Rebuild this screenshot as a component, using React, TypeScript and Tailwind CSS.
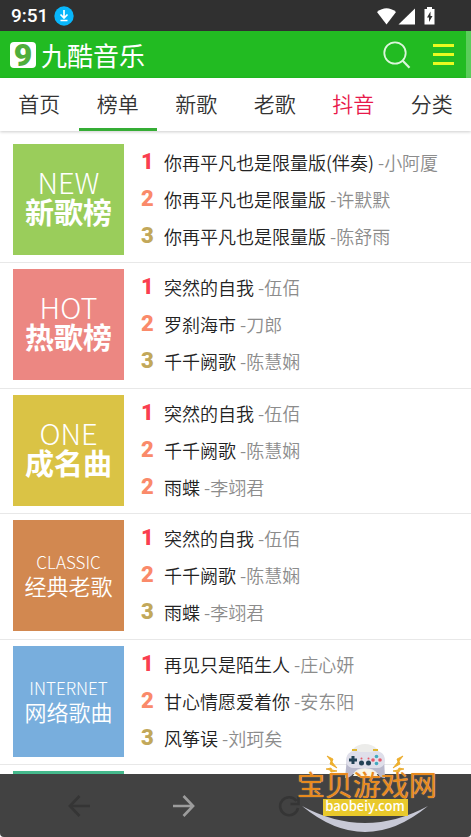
import React from "react";

type Song = { rank: number; title: string; artist: string };
type Chart = { en: string; zh: string; color: string; light?: boolean; songs: Song[] };

const nav = ["首页", "榜单", "新歌", "老歌", "抖音", "分类"];

const charts: Chart[] = [
  {
    en: "NEW", zh: "新歌榜", color: "bg-[#9acd5b]",
    songs: [
      { rank: 1, title: "你再平凡也是限量版(伴奏)", artist: "小阿厦" },
      { rank: 2, title: "你再平凡也是限量版", artist: "许默默" },
      { rank: 3, title: "你再平凡也是限量版", artist: "陈舒雨" },
    ],
  },
  {
    en: "HOT", zh: "热歌榜", color: "bg-[#ec8782]",
    songs: [
      { rank: 1, title: "突然的自我", artist: "伍佰" },
      { rank: 2, title: "罗刹海市", artist: "刀郎" },
      { rank: 3, title: "千千阙歌", artist: "陈慧娴" },
    ],
  },
  {
    en: "ONE", zh: "成名曲", color: "bg-[#dac345]",
    songs: [
      { rank: 1, title: "突然的自我", artist: "伍佰" },
      { rank: 2, title: "千千阙歌", artist: "陈慧娴" },
      { rank: 2, title: "雨蝶", artist: "李翊君" },
    ],
  },
  {
    en: "CLASSIC", zh: "经典老歌", color: "bg-[#d28850]", light: true,
    songs: [
      { rank: 1, title: "突然的自我", artist: "伍佰" },
      { rank: 2, title: "千千阙歌", artist: "陈慧娴" },
      { rank: 3, title: "雨蝶", artist: "李翊君" },
    ],
  },
  {
    en: "INTERNET", zh: "网络歌曲", color: "bg-[#78aedd]", light: true,
    songs: [
      { rank: 1, title: "再见只是陌生人", artist: "庄心妍" },
      { rank: 2, title: "甘心情愿爱着你", artist: "安东阳" },
      { rank: 3, title: "风筝误", artist: "刘珂矣" },
    ],
  },
  { en: "", zh: "", color: "bg-[#45b98c]", songs: [] },
];

const rankColors: Record<number, string> = {
  1: "text-[#fa3e50]",
  2: "text-[#fa8a6a]",
  3: "text-[#c2a85a]",
};

function StatusBar() {
  return (
    <div className="flex h-[31px] shrink-0 items-center bg-[#303030] pt-px pr-9 pl-[11px] text-white">
      <span className="font-['Roboto',sans-serif] text-[19px] font-medium">9:51</span>
      <svg className="ml-[6px] size-5" viewBox="0 0 20 20">
        <circle cx="10" cy="10" r="9.7" fill="#08b6fb" />
        <path d="M10 4v7.500M6.500 8.500l3.500 3.500 3.500-3.500M6.500 14.500h7" fill="none" stroke="#fff" strokeWidth="1.700" />
      </svg>
      <svg className="ml-auto h-[18px] w-[58px]" viewBox="0 0 58 18" fill="#fff">
        <path d="M0 5Q9.5-2.500 19 5L9.500 17.500Z" />
        <path d="M38 1.500v16H21.500Z" />
        <path d="M50 0h5v2h2.500v15.500H47.500V2H50Z" />
        <path d="M53.500 4.500l-3.500 6h2v4.500l3.500-6h-2Z" fill="#303030" />
      </svg>
    </div>
  );
}

function Header() {
  return (
    <header className="flex h-[47px] shrink-0 items-center border-r-[5px] border-[#5bcd5b] bg-[#22bb22] pr-3 pl-[10px]">
      <a href="#home" className="flex items-center gap-[5px] text-white">
        <span className="flex size-[26px] items-center justify-center rounded-[4px] bg-white font-['Roboto',sans-serif] text-[32px] leading-[26px] font-black text-[#4fae3b]">
          9
        </span>
        <span className="text-[26px] leading-6">九酷音乐</span>
      </a>
      <button aria-label="搜索" className="ml-auto">
        <svg className="size-[28px]" viewBox="0 0 28 28" fill="none" stroke="#dcf6dc" strokeWidth="1.800">
          <circle cx="12" cy="12" r="10.700" />
          <path d="M19.500 19.500l7 7.200" strokeWidth="2.200" />
        </svg>
      </button>
      <button aria-label="菜单" className="ml-[22px] flex w-[21px] flex-col gap-[6px]">
        <span className="h-[3px] bg-[#eafa20]" />
        <span className="h-[3px] bg-[#eafa20]" />
        <span className="h-[3px] bg-[#eafa20]" />
      </button>
    </header>
  );
}

function Nav() {
  return (
    <nav className="z-10 flex h-[53px] shrink-0 bg-white shadow-[0_1px_3px_rgba(0,0,0,0.2)]">
      {nav.map((label) => (
        <a
          key={label}
          href={"#" + label}
          className={
            "flex flex-1 items-center justify-center border-b-[3px] text-[21px] leading-none font-[350] " +
            (label === "榜单" ? "border-[#35ad35] " : "border-transparent ") +
            (label === "抖音" ? "text-[#e8194b]" : "text-[#333333]")
          }
        >
          {label}
        </a>
      ))}
    </nav>
  );
}

function Tile({ chart }: { chart: Chart }) {
  return (
    <div className={"flex size-[111px] shrink-0 flex-col items-center justify-center pb-[5px] text-white " + chart.color}>
      {chart.light ? (
        <>
          <span className="text-[17px] leading-6 font-light">{chart.en}</span>
          <span className="text-[22px] leading-[22px] font-[350]">{chart.zh}</span>
        </>
      ) : (
        <>
          <span className="text-[29px] leading-7 font-extralight">{chart.en}</span>
          <span className="text-[29px] leading-8 font-bold">{chart.zh}</span>
        </>
      )}
    </div>
  );
}

function ChartRow({ chart }: { chart: Chart }) {
  return (
    <section className="flex h-[125px] gap-[17px] border-b border-[#e8e8e8] px-[13px] pt-[6px] even:h-[126px]">
      <Tile chart={chart} />
      <ol className="flex h-[110px] min-w-0 flex-1 flex-col">
        {chart.songs.map((song, i) => (
          <li key={i} className="flex flex-1 items-center text-[18px] leading-6 whitespace-nowrap">
            <span className={"w-[23px] font-['Roboto',sans-serif] text-[22px] font-black " + rankColors[song.rank]}>
              {song.rank}
            </span>
            <a href="#song" className="font-[350] text-[#222222]">
              {song.title}
              <span className="text-[#8c8c8c]"> -{song.artist}</span>
            </a>
          </li>
        ))}
      </ol>
    </section>
  );
}

function Watermark() {
  return (
    <div className="absolute right-[33px] bottom-[4px] flex w-[142px] flex-col items-center">
      <svg className="h-[91px] w-full" viewBox="0 0 142 91">
        <circle cx="69" cy="19" r="17" fill="#ececea" />
        <path d="M51 16L49 36Q54 36 57 32Q60 26 69 26Q78 26 82 32Q84 36 89 36L88 16Z" fill="#b9b9cc" />
        <path d="M57 34Q60 27 69 27Q79 27 82 34Z" fill="#f8f6e8" />
        <path d="M55 10Q60 8 64 10H75Q80 8 84 10Q89 12 89 19Q88 26 81 26H58Q51 26 50 19Q50 12 55 10Z" fill="#dfdfea" />
        <path d="M56 8h5M77 8h5" stroke="#dfb62f" strokeWidth="2" />
        <path d="M57 14v8M53 18h8" stroke="#234255" strokeWidth="3" />
        <circle cx="77" cy="18" r="1.800" fill="#e7586a" />
        <circle cx="84" cy="18" r="1.800" fill="#e7586a" />
        <circle cx="80.500" cy="14.500" r="1.800" fill="#42a9bf" />
        <circle cx="80.500" cy="21.500" r="1.800" fill="#42a9bf" />
        <circle cx="65.500" cy="21" r="2.500" fill="#234255" />
        <circle cx="72.500" cy="21" r="2.500" fill="#234255" />
        <circle cx="65.500" cy="16.500" r="1" fill="#e7586a" />
        <circle cx="72.500" cy="16.500" r="1" fill="#e7586a" />
        <path d="M31 14l6 3-1 3 5 6-7-4 1-3ZM30 27l5-1 1 2 5 1-6 1-1-2ZM107 14l-6 3 1 3-5 6 7-4-1-3ZM108 27l-5-1-1 2-5 1 6 1 1-2Z" fill="#f0b22a" stroke="#e9a623" strokeWidth="0.800" />
        <path d="M6 64Q69 116 132 64Q69 98 6 64Z" fill="#c8c9d6" />
      </svg>
      <div className="absolute top-[27px] text-[28px] leading-[30px] whitespace-nowrap text-[#e88a1e] [text-shadow:0_0_1px_#f7cf94]">
        宝贝游戏网
      </div>
      <div className="absolute top-[57px] mr-[4px] flex h-[17px] w-[85px] items-center justify-center bg-[#e9c92b] pb-[3px] text-[13px] leading-[14px] font-medium text-white">
        baobeiy.com
      </div>
    </div>
  );
}

function BottomBar() {
  return (
    <footer className="relative z-10 h-[63px] shrink-0 rounded-b-[4px] bg-[#424242]">
      <div className="grid h-full grid-cols-4 items-center pr-[25px] pl-[26px]">
        <button aria-label="后退" disabled className="justify-self-center text-[#353535]">
          <Arrow left />
        </button>
        <button aria-label="前进" className="justify-self-center text-[#9c9c9c]">
          <Arrow />
        </button>
        <button aria-label="刷新" className="justify-self-center text-[#353535]">
          <svg className="size-[22px]" viewBox="0 0 22 22" fill="none" stroke="currentColor" strokeWidth="2.600">
            <path d="M18.500 6A9 9 0 1 0 20 13M20.500 1v8h-8" />
          </svg>
        </button>
      </div>
      <Watermark />
    </footer>
  );
}

function Arrow({ left }: { left?: boolean }) {
  return (
    <svg className="h-[22px] w-[22px]" viewBox="0 0 22 22" fill="none" stroke="currentColor" strokeWidth="2.600">
      {left ? <path d="M11.500 1L1.900 11l9.600 10M1.500 11H22" /> : <path d="M10.500 1L20.100 11l-9.600 10M20.500 11H0" />}
    </svg>
  );
}

export default function App() {
  return (
    <div className="flex h-screen flex-col overflow-hidden bg-white font-['Noto_Sans_CJK_SC',sans-serif]">
      <StatusBar />
      <Header />
      <Nav />
      <main className="min-h-0 flex-1 overflow-hidden pt-[7px]">
        {charts.map((chart, i) => (
          <ChartRow key={i} chart={chart} />
        ))}
      </main>
      <BottomBar />
    </div>
  );
}
